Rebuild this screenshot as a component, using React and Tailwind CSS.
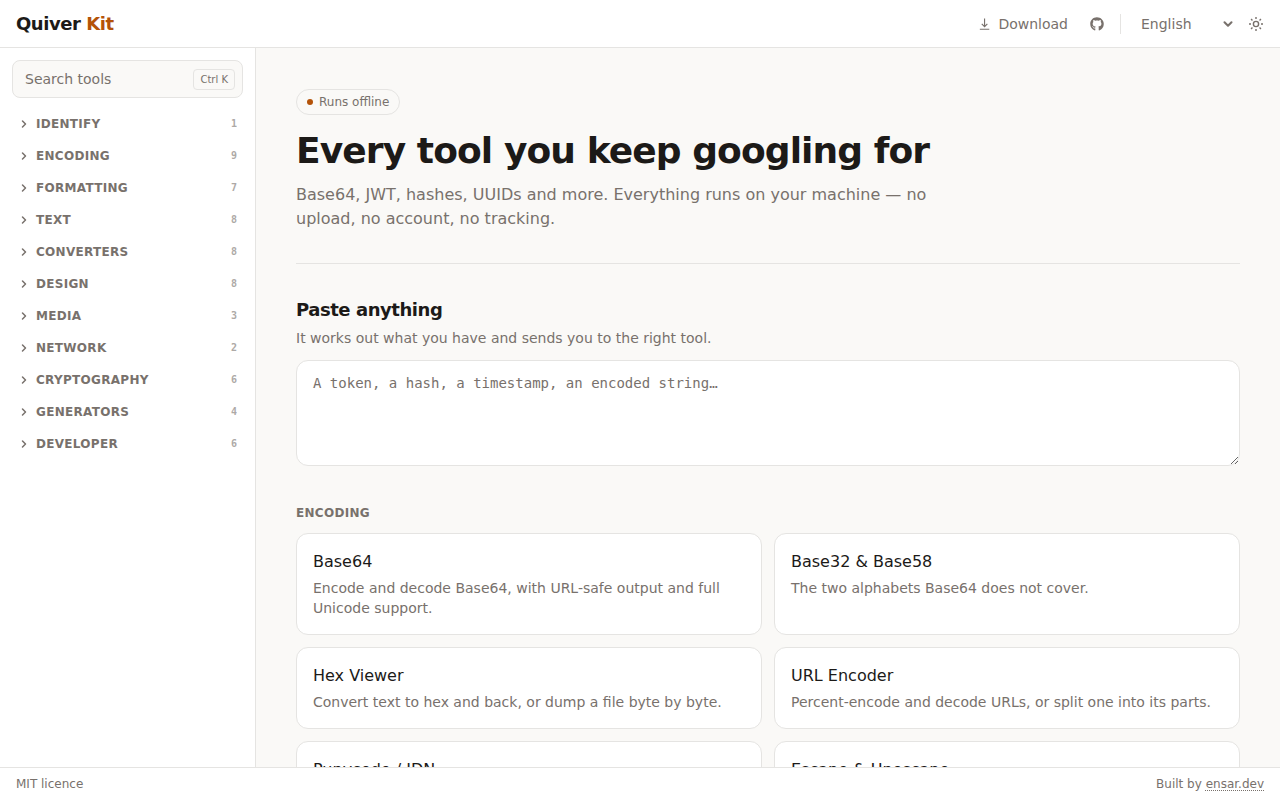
import { useState } from "react";
import { ChevronDown, ChevronRight } from "lucide-react";
import { FaGithub } from "react-icons/fa";

const categories = [
  { label: "Identify", count: 1 },
  { label: "Encoding", count: 9 },
  { label: "Formatting", count: 7 },
  { label: "Text", count: 8 },
  { label: "Converters", count: 8 },
  { label: "Design", count: 8 },
  { label: "Media", count: 3 },
  { label: "Network", count: 2 },
  { label: "Cryptography", count: 6 },
  { label: "Generators", count: 4 },
  { label: "Developer", count: 6 },
];

const encodingTools = [
  { name: "Base64", description: "Encode and decode Base64, with URL-safe output and full Unicode support." },
  { name: "Base32 & Base58", description: "The two alphabets Base64 does not cover." },
  { name: "Hex Viewer", description: "Convert text to hex and back, or dump a file byte by byte." },
  { name: "URL Encoder", description: "Percent-encode and decode URLs, or split one into its parts." },
  { name: "Punycode / IDN", description: "" },
  { name: "Escape & Unescape", description: "" },
];

const DownloadIcon = () => (
  <svg viewBox="0 0 16 16" className="w-3.5 h-3.5" fill="none" stroke="currentColor" strokeWidth="1.3">
    <path d="M7.5 1.8v9M4.3 7.8l3.2 3.2 3.2-3.2M2.1 14h10.8" />
  </svg>
);

const SunIcon = () => (
  <svg viewBox="0 0 16 16" className="w-4 h-4" fill="none" stroke="currentColor" strokeWidth="1.4">
    <circle cx="8" cy="8" r="2.6" />
    <path d="M8 1v2M8 13v2M1 8h2M13 8h2M3.05 3.05l1.4 1.4M11.55 11.55l1.4 1.4M3.05 12.95l1.4-1.4M11.55 4.45l1.4-1.4" />
  </svg>
);

const Header = () => (
  <header className="h-12 shrink-0 flex items-center justify-between px-4 bg-white border-b border-[#e5e4e2]">
    <a href="#" className="text-lg font-bold tracking-tight">
      Quiver <span className="text-[#b45309]">Kit</span>
    </a>
    <div className="flex items-center text-sm text-[#78716c]">
      <a href="#" className="flex items-center gap-1.5">
        <DownloadIcon />
        Download
      </a>
      <a href="#" className="ml-[22px]" aria-label="GitHub">
        <FaGithub className="w-3.5 h-3.5" />
      </a>
      <span className="w-px h-5 ml-4 bg-[#e5e4e2]" />
      <button className="flex items-center justify-between w-[94px] ml-5">
        English
        <ChevronDown className="w-3.5 h-3.5" strokeWidth={3.5} />
      </button>
      <button className="ml-[13px]" aria-label="Toggle theme">
        <SunIcon />
      </button>
    </div>
  </header>
);

const Sidebar = () => (
  <aside className="w-64 shrink-0 p-3 bg-white border-r border-[#e5e4e2]">
    <button className="flex items-center justify-between w-full h-[38px] pl-3 pr-[7px] rounded-lg border border-[#e5e4e2] bg-[#faf9f7] text-sm text-[#78716c]">
      Search tools
      <kbd className="px-1.5 py-0.5 rounded border border-[#e5e4e2] font-['DejaVu_Sans',sans-serif] text-[10px] leading-[15px]">
        Ctrl K
      </kbd>
    </button>
    <nav className="mt-2.5">
      {categories.map((category) => (
        <button
          key={category.label}
          className="flex items-center w-full h-8 px-1.5 text-xs font-semibold uppercase tracking-wide text-[#78716c]"
        >
          <ChevronRight className="w-3 h-3 mr-1.5" strokeWidth={3} />
          {category.label}
          <span className="ml-auto font-['DejaVu_Sans_Mono',monospace] text-[10px] tracking-normal opacity-60">
            {category.count}
          </span>
        </button>
      ))}
    </nav>
  </aside>
);

const ToolCard = ({ tool }) => (
  <a href="#" className="block p-4 rounded-xl border border-[#e5e4e2] bg-white">
    <h3 className="text-base">{tool.name}</h3>
    <p className="mt-1 min-h-5 text-sm text-[#78716c]">{tool.description}</p>
  </a>
);

const App = () => {
  const [input, setInput] = useState("");

  return (
    <div className="h-screen flex flex-col overflow-hidden bg-[#faf9f7] font-['DejaVu_Sans',sans-serif] text-[#1c1a18]">
      <Header />
      <div className="flex flex-1 min-h-0">
        <Sidebar />
        <main className="flex-1 min-w-0 overflow-hidden px-10 pt-[41px]">
          {/* Hero */}
          <section className="pb-8 border-b border-[#e5e4e2]">
            <span className="flex items-center gap-1.5 w-fit px-2.5 py-1 rounded-full border border-[#e5e4e2] text-xs text-[#78716c]">
              <span className="w-1.5 h-1.5 rounded-full bg-[#b45309]" />
              Runs offline
            </span>
            <h1 className="mt-4 text-4xl font-bold tracking-tight">Every tool you keep googling for</h1>
            <p className="mt-3 max-w-2xl text-base text-[#78716c]">
              Base64, JWT, hashes, UUIDs and more. Everything runs on your machine — no upload, no account, no tracking.
            </p>
          </section>

          {/* Paste box */}
          <section className="mt-8">
            <h2 className="text-lg font-semibold tracking-tight">Paste anything</h2>
            <p className="mt-1 text-sm text-[#78716c]">It works out what you have and sends you to the right tool.</p>
            <textarea
              value={input}
              onChange={(e) => setInput(e.target.value)}
              placeholder="A token, a hash, a timestamp, an encoded string…"
              className="block w-full h-[106px] mt-3 px-4 py-3 rounded-xl border border-[#e5e4e2] bg-white font-['DejaVu_Sans_Mono',monospace] text-sm placeholder:text-[#78716c]"
            />
          </section>

          <section className="mt-[39px]">
            <h2 className="text-xs font-semibold uppercase tracking-wide text-[#78716c]">Encoding</h2>
            <div className="grid grid-cols-2 gap-3 mt-3">
              {encodingTools.map((tool) => (
                <ToolCard key={tool.name} tool={tool} />
              ))}
            </div>
          </section>
        </main>
      </div>
      <footer className="h-[33px] shrink-0 flex items-center justify-between px-4 bg-white border-t border-[#e5e4e2] text-xs text-[#78716c]">
        <span>MIT licence</span>
        <span>
          Built by{" "}
          <a href="#" className="underline decoration-dotted underline-offset-2">
            ensar.dev
          </a>
        </span>
      </footer>
    </div>
  );
};

export default App;
